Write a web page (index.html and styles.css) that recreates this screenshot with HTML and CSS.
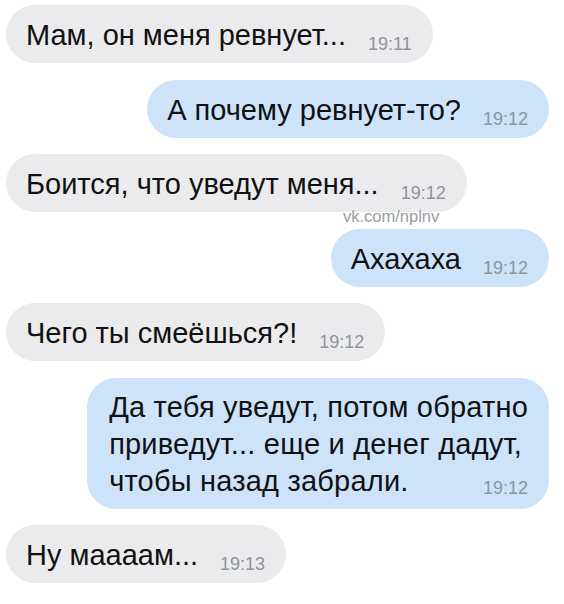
FILE: index.html
```html
<!DOCTYPE html>
<html>
<head>
    <title>Чат</title>
    <link rel="stylesheet" href="styles.css">
</head>
<body>
    <div class="chat">
        <div class="msg in">
            <p class="bubble">Мам, он меня ревнует...<span class="time">19:11</span></p>
        </div>
        <div class="msg out">
            <p class="bubble">А почему ревнует-то?<span class="time">19:12</span></p>
        </div>
        <div class="msg in">
            <p class="bubble">Боится, что уведут меня...<span class="time">19:12</span></p>
            <span class="watermark">vk.com/nplnv</span>
        </div>
        <div class="msg out">
            <p class="bubble">Ахахаха<span class="time">19:12</span></p>
        </div>
        <div class="msg in">
            <p class="bubble">Чего ты смеёшься?!<span class="time">19:12</span></p>
        </div>
        <div class="msg out">
            <!-- time floats onto the last line -->
            <p class="bubble multi">Да тебя уведут, потом обратно<br>приведут... еще и денег дадут,<br><span class="time">19:12</span>чтобы назад забрали.</p>
        </div>
        <div class="msg in">
            <p class="bubble">Ну маааам...<span class="time">19:13</span></p>
        </div>
    </div>
</body>
</html>
```

FILE: styles.css
```css
body {
    margin: 0;
    background: #fff;
    font-family: "Liberation Sans", Arial, sans-serif;
    color: #111;
}
.chat {
    display: flex;
    flex-direction: column;
    gap: 16.5px;
    padding: 5px 15px 0 6px;
}
.msg {
    display: flex;
    position: relative;
}
.msg.out {
    justify-content: flex-end;
}
.bubble {
    margin: 0;
    padding: 11px 21px 9px 20px;
    font-size: 29px;
    line-height: 38px;
    border-radius: 29px;
    white-space: nowrap;
}
.bubble.multi {
    padding-left: 22px;
    line-height: 37px;
    letter-spacing: 0.2px;
}
.msg.in .bubble {
    background: #ebebee;
}
.msg.out .bubble {
    background: #cde3fa;
}
.time {
    position: relative;
    top: 5px;
    margin-left: 22px;
    font-size: 18px;
    line-height: 1;
    letter-spacing: 0;
    color: #8d949e;
}
.bubble.multi .time {
    float: right;
    margin-left: 0;
    margin-top: 11px;
}
.watermark {
    position: absolute;
    left: 337px;
    top: 53px;
    font-size: 16.5px;
    color: #9a9da2;
}
```
